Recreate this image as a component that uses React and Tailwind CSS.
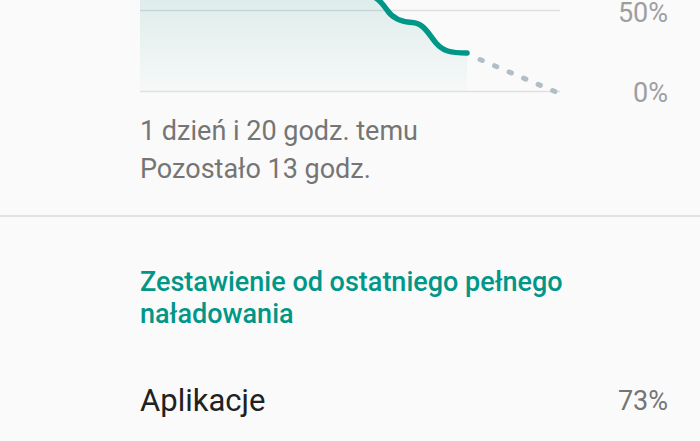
import React from 'react';

const curve = 'M 215 -8 C 235 -6, 240 0, 247 10 C 253 19, 262 22, 272 22.5 C 284 23, 289 35, 296 43 C 303 51, 310 53, 327 53';

const BatteryChart = () => (
  <svg width="420" height="100" viewBox="0 0 420 100" className="block shrink-0 overflow-visible">
    <defs>
      <linearGradient id="fill" x1="0" y1="0" x2="0" y2="1">
        <stop offset="0%" stopColor="#dbecea" />
        <stop offset="100%" stopColor="#f7f8f8" />
      </linearGradient>
    </defs>
    {/* area under the used part */}
    <path d={`M 0 -10 L 215 -10 L 215 -8 ${curve.slice(curve.indexOf('C'))} L 327 91 L 0 91 Z`} fill="url(#fill)" />
    <line x1="0" y1="10.5" x2="420" y2="10.5" stroke="#000" strokeOpacity="0.1" strokeWidth="1.5" />
    <line x1="0" y1="91.5" x2="420" y2="91.5" stroke="#000" strokeOpacity="0.1" strokeWidth="1.5" />
    <path d={curve} fill="none" stroke="#009688" strokeWidth="5.5" strokeLinecap="round" />
    {/* projection */}
    <line x1="340" y1="59.5" x2="416" y2="92" stroke="#b0bec5" strokeWidth="5" strokeLinecap="round" strokeDasharray="2.5 13.3" />
  </svg>
);

export default function App() {
  return (
    <div className="w-[700px] h-[441px] overflow-hidden bg-[#fafafa] font-['Roboto','Liberation_Sans',sans-serif]">
      <div className="pl-[140px] pr-[32px]">
        <div className="flex h-[100px] overflow-visible">
          <BatteryChart />
          <div className="flex-1 flex flex-col items-end text-[27px] leading-[26px] text-[#9e9e9e]">
            <span>50%</span>
            <span className="mt-[54px]">0%</span>
          </div>
        </div>
        <div className="mt-3 text-[27px] leading-[38px] text-[#757575]">
          <p>1 dzień i 20 godz. temu</p>
          <p>Pozostało 13 godz.</p>
        </div>
      </div>

      <div className="mt-[27px] h-[2px] bg-[#e2e2e2]" />

      <div className="pl-[140px] pr-[32px]">
        <h2 className="mt-[49px] text-[27px] leading-[32px] font-medium text-[#009688]">
          Zestawienie od ostatniego pełnego naładowania
        </h2>
        <div className="mt-[53px] flex items-center justify-between">
          <span className="text-[31px] leading-[36px] text-[#212121]">Aplikacje</span>
          <span className="text-[27px] leading-[26px] text-[#757575]">73%</span>
        </div>
      </div>
    </div>
  );
}
